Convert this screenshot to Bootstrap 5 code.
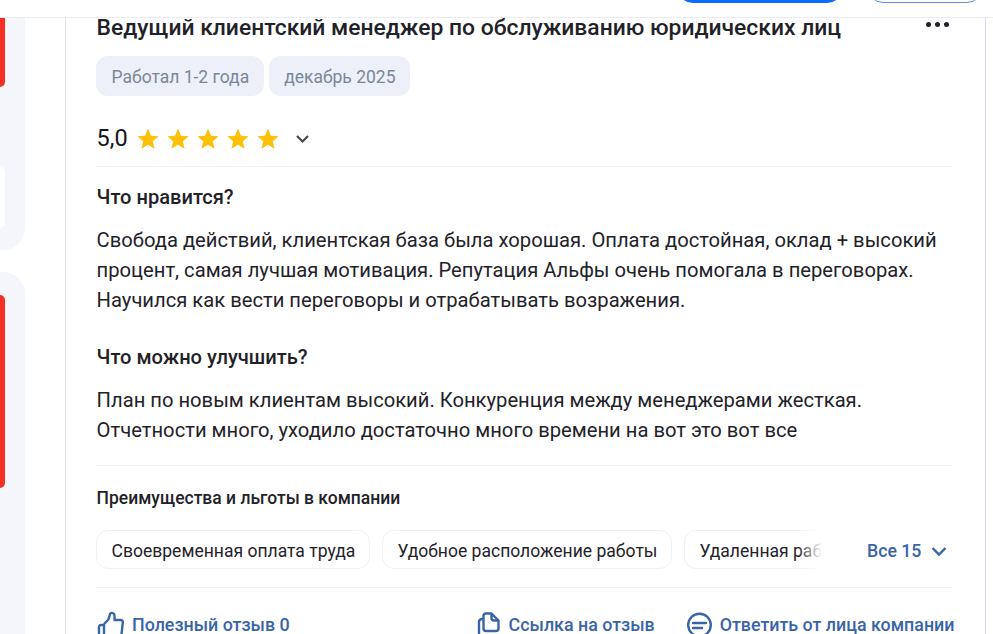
<!DOCTYPE html>
<html lang="ru">
<head>
    <meta charset="UTF-8">
    <meta name="viewport" content="width=device-width, initial-scale=1.0">
    <title>Отзыв о компании</title>
    <link href="https://cdn.jsdelivr.net/npm/bootstrap@5.3.0/dist/css/bootstrap.min.css" rel="stylesheet">
    <style>
        html, body { height: 634px; overflow: hidden; }
        body { background: #fff; font-family: Roboto, "Liberation Sans", sans-serif; color: #1f2229; font-size: 20.2px; line-height: 30px; }
        .top-strip { height: 18px; border-bottom: 1px solid #e9ebf0; padding-right: 10px; gap: 24px; }
        .top-btn-fill { width: 166px; height: 21px; margin-top: -18px; background: #0a6cff; border-radius: 0 0 16px 16px; }
        .top-btn-line { width: 116px; height: 21px; margin-top: -18px; border: 1px solid #5b8fe8; border-radius: 0 0 16px 16px; }
        .side-col { width: 25px; height: 616px; gap: 22px; }
        .side-panel { background: #f4f6fb; }
        .side-one { height: 232px; border-radius: 0 0 22px 0; }
        .side-two { flex: 1; padding-top: 23px; border-radius: 0 22px 0 0; }
        .red-one { width: 5px; height: 69px; background: #f52f23; border-radius: 0 0 6px 0; }
        .white-block { width: 5px; height: 61px; margin-top: 80px; background: #fff; border-radius: 0 6px 6px 0; }
        .red-two { width: 5px; height: 193px; background: #f52f23; border-radius: 0 6px 6px 0; }
        .review-box { width: 921px; height: 616px; margin-left: 40px; padding: 0 32px 0 30px; border-left: 1px solid #e2e4ea; border-right: 1px solid #d5dff0; }
        .txt-shift { padding-left: .6px; }
        .review-title { font-size: 22.85px; line-height: 20px; font-weight: 500; color: #1f2229; white-space: nowrap; }
        .dots { gap: 4px; margin-top: 4px; margin-right: 4px; }
        .dots i { display: block; width: 5px; height: 5px; border-radius: 50%; background: #1f2229; }
        .tag-row { gap: 5px; margin-top: 18px; }
        .tag-grey { height: 40px; padding: 0 14.5px 0 15.5px; border-radius: 12px; background: #edf0f8; color: #7b8798; font-size: 17.5px; line-height: 43px; }
        .rating-row { height: 30px; margin-top: 27px; }
        .rating-num { font-size: 23.5px; line-height: 30px; color: #14161b; margin-right: 8px; }
        .rating-stars { gap: 6px; margin-top: 2px; }
        .rating-caret { margin-left: 15px; margin-top: 2px; }
        .hr-line { height: 1px; background: #f1f3f8; }
        .gap-rate { margin-top: 13px; }
        .gap-head { margin-top: 15px; }
        .gap-text { margin-top: 13px; }
        .gap-head-two { margin-top: 27px; }
        .gap-benefits { margin-top: 20px; }
        .gap-small { margin-top: 17px; }
        .gap-foot { margin-top: 18px; }
        .head-bold { font-size: 20.1px; font-weight: 500; line-height: 30px; }
        .small-bold { font-size: 17.5px; font-weight: 500; line-height: 30px; }
        .perk-row { height: 39px; margin-top: 17px; }
        .perk-scroll { width: 726px; gap: 12px; overflow: hidden; position: relative; }
        .perk-scroll::after { content: ""; position: absolute; top: 0; right: 0; width: 24px; height: 39px; background: linear-gradient(90deg, rgba(255,255,255,0), #fff); }
        .perk-tag { flex: none; height: 39px; padding: 0 13.5px 0 14.5px; border: 1px solid #eef0f8; border-radius: 12px; font-size: 17.55px; line-height: 40px; color: #1f2229; }
        .all-link { color: #3a64a8; font-size: 17.7px; font-weight: 500; margin-left: 45px; margin-top: 2px; white-space: nowrap; }
        .all-caret { margin-left: 10px; margin-top: 2px; }
        .foot-row { margin-top: 23px; color: #3a64a8; font-size: 17.85px; font-weight: 500; line-height: 28px; }
        .foot-item { gap: 7px; white-space: nowrap; }
        .thumb-item { gap: 8px; }
        .copy-item { gap: 8px; }
        .foot-right { gap: 32px; margin-right: -1.5px; }
    </style>
</head>
<body>
    <div class="top-strip d-flex justify-content-end">
        <div class="top-btn-fill"></div>
        <div class="top-btn-line"></div>
    </div>
    <div class="d-flex">
        <div class="side-col d-flex flex-column">
            <div class="side-panel side-one">
                <div class="red-one"></div>
                <div class="white-block"></div>
            </div>
            <div class="side-panel side-two">
                <div class="red-two"></div>
            </div>
        </div>
        <div class="review-box">
            <div class="d-flex justify-content-between">
                <div class="review-title txt-shift">Ведущий клиентский менеджер по обслуживанию юридических лиц</div>
                <div class="dots d-flex"><i></i><i></i><i></i></div>
            </div>
            <div class="tag-row d-flex">
                <div class="tag-grey">Работал 1-2 года</div>
                <div class="tag-grey">декабрь 2025</div>
            </div>
            <div class="rating-row d-flex align-items-center">
                <span class="rating-num txt-shift">5,0</span>
                <div class="rating-stars d-flex">
                    <svg width="24" height="24" viewBox="0 0 24 24"><path fill="#ffc107" d="M12 1.500l3 7.200 7.600.6-5.800 5 1.800 7.500L12 17.800l-6.600 4 1.800-7.500-5.800-5 7.600-.6z"/></svg>
                    <svg width="24" height="24" viewBox="0 0 24 24"><path fill="#ffc107" d="M12 1.500l3 7.200 7.600.6-5.800 5 1.800 7.500L12 17.800l-6.600 4 1.800-7.500-5.800-5 7.600-.6z"/></svg>
                    <svg width="24" height="24" viewBox="0 0 24 24"><path fill="#ffc107" d="M12 1.500l3 7.200 7.600.6-5.800 5 1.800 7.500L12 17.800l-6.600 4 1.800-7.500-5.800-5 7.600-.6z"/></svg>
                    <svg width="24" height="24" viewBox="0 0 24 24"><path fill="#ffc107" d="M12 1.500l3 7.200 7.600.6-5.800 5 1.800 7.500L12 17.800l-6.600 4 1.800-7.500-5.800-5 7.600-.6z"/></svg>
                    <svg width="24" height="24" viewBox="0 0 24 24"><path fill="#ffc107" d="M12 1.500l3 7.200 7.600.6-5.800 5 1.800 7.500L12 17.800l-6.600 4 1.800-7.500-5.800-5 7.600-.6z"/></svg>
                </div>
                <svg class="rating-caret" width="16" height="16" viewBox="0 0 16 16"><path fill="none" stroke="#44474f" stroke-width="2.200" d="M2 5l5.500 5.500L13 5"/></svg>
            </div>
            <div class="hr-line gap-rate"></div>
            <div class="head-bold gap-head txt-shift">Что нравится?</div>
            <div class="gap-text txt-shift">Свобода действий, клиентская база была хорошая. Оплата достойная, оклад + высокий<br>процент, самая лучшая мотивация. Репутация Альфы очень помогала в переговорах.<br>Научился как вести переговоры и отрабатывать возражения.</div>
            <div class="head-bold gap-head-two txt-shift">Что можно улучшить?</div>
            <div class="gap-text txt-shift">План по новым клиентам высокий. Конкуренция между менеджерами жесткая.<br>Отчетности много, уходило достаточно много времени на вот это вот все</div>
            <div class="hr-line gap-benefits"></div>
            <div class="small-bold gap-small txt-shift">Преимущества и льготы в компании</div>
            <div class="perk-row d-flex align-items-center">
                <div class="perk-scroll d-flex">
                    <div class="perk-tag">Своевременная оплата труда</div>
                    <div class="perk-tag">Удобное расположение работы</div>
                    <div class="perk-tag">Удаленная работа</div>
                </div>
                <span class="all-link">Все 15</span>
                <svg class="all-caret" width="16" height="16" viewBox="0 0 16 16"><path fill="none" stroke="#3a64a8" stroke-width="2.400" d="M1.500 5l6.500 6.500L14.500 5"/></svg>
            </div>
            <div class="hr-line gap-foot"></div>
            <div class="foot-row d-flex justify-content-between">
                <div class="foot-item thumb-item d-flex align-items-center">
                    <svg width="28" height="28" viewBox="0 0 28 28"><path fill="none" stroke="#3a64a8" stroke-width="2.400" stroke-linejoin="round" stroke-linecap="round" d="M8 28V14c0-1 .5-1.500 1-2l3-3c1-1.500 1.500-4 2-6 .5-1.500 3-1.500 4 0 1 1.500.5 4 .5 6h6c1.500 0 2.500 1 2.300 2.500L25 28M8 14H5c-1 0-2 1-2 2v12"/></svg>
                    <span>Полезный отзыв 0</span>
                </div>
                <div class="foot-right d-flex">
                    <div class="foot-item copy-item d-flex align-items-center">
                        <svg width="24" height="28" viewBox="0 0 24 28"><path fill="none" stroke="#3a64a8" stroke-width="2.400" stroke-linejoin="round" d="M6.500 17.500V5c0-1.500 1-2.500 2.500-2.500h5.500l7 7v8c0 1.500-1 2.500-2.500 2.500H9c-1.500 0-2.500-1-2.500-2.500zM14.500 3v4c0 1.500 1 2.500 2.500 2.500h4.500M6.500 8H5C3.500 8 2 9 2 10.500V24c0 2 1 3 3 3h10c1.500 0 2.500-1 2.500-2.500"/></svg>
                        <span>Ссылка на отзыв</span>
                    </div>
                    <div class="foot-item d-flex align-items-center">
                        <svg width="26" height="28" viewBox="0 0 26 28"><circle cx="12.500" cy="14" r="11.300" fill="none" stroke="#3a64a8" stroke-width="2.400"/><path fill="none" stroke="#3a64a8" stroke-width="2.400" stroke-linecap="round" d="M6 12h13M6 17h9"/></svg>
                        <span>Ответить от лица компании</span>
                    </div>
                </div>
            </div>
        </div>
    </div>
    <script src="https://cdn.jsdelivr.net/npm/bootstrap@5.3.0/dist/js/bootstrap.bundle.min.js"></script>
</body>
</html>
